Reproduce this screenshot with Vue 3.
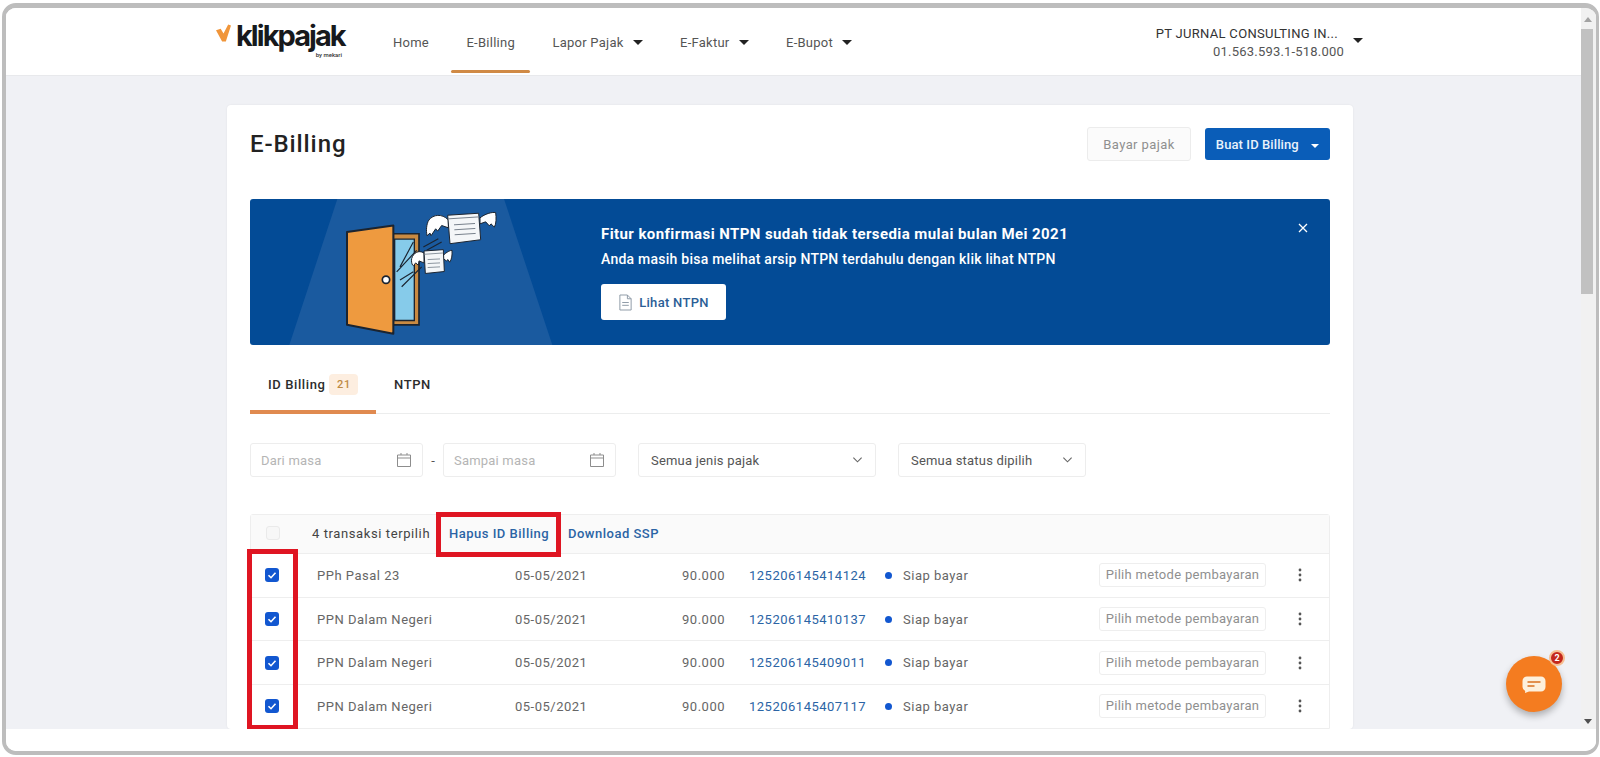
<template>
  <div class="window">
    <div class="frame">
      <div class="viewport">
        <div class="page">
          <header class="topbar">
            <div class="logo">
              <svg class="logo__check" viewBox="0 0 16 18" aria-hidden="true">
                <path d="M0 6l5-1.500 3 5L13 0l3 1-5.500 17H6.500z" fill="#f0953a" />
              </svg>
              <div class="logo__words">
                <span class="logo__name">klikpajak</span>
                <span class="logo__by">by mekari</span>
              </div>
            </div>
            <nav class="nav">
              <a
                v-for="item in navItems"
                :key="item.label"
                class="nav__item"
                :class="{ 'nav__item--active': item.active }"
              >
                {{ item.label }}
                <i v-if="item.caret" class="caret"></i>
              </a>
            </nav>
            <div class="account">
              <div class="account__text">
                <div class="account__name">PT JURNAL CONSULTING IN...</div>
                <div class="account__npwp">01.563.593.1-518.000</div>
              </div>
              <i class="caret account__caret"></i>
            </div>
          </header>

          <main class="card">
            <div class="card__head">
              <h1 class="card__title">E-Billing</h1>
              <button class="btn btn--ghost">Bayar pajak</button>
              <button class="btn btn--primary">Buat ID Billing <i class="caret caret--white"></i></button>
            </div>

            <section class="banner">
              <svg class="banner__art" viewBox="15 25 1053 441" preserveAspectRatio="none" aria-hidden="true">
                <path d="M277 25H777L922 466H133z" fill="#1a5a9f" />
                <path d="M445 130H522V405H445z" fill="#c98a42" stroke="#1b2430" stroke-width="5" />
                <path d="M449 146H508V392H449z" fill="#86cbea" stroke="#1b2430" stroke-width="4" />
                <path d="M306 125L445 105V432L306 405z" fill="#ee9a3f" stroke="#1b2430" stroke-width="6" stroke-linejoin="round" />
                <circle cx="423" cy="269" r="11" fill="#fff" stroke="#1b2430" stroke-width="5" />
                <path d="M465 230L505 155M455 245L515 180M465 270L505 245M470 290L530 230M535 170L580 145M545 180L590 155" stroke="#1b2430" stroke-width="3.500" fill="none" />

                <path d="M610 88C590 68 565 72 552 88C544 100 543 120 546 136L555 128L558 136L572 115L578 122L590 105L610 112z" fill="#fff" stroke="#1b2430" stroke-width="3" stroke-linejoin="round" />
                <path d="M705 82C720 70 740 64 752 66C754 82 754 100 748 110L738 100L733 106L722 94L705 100z" fill="#fff" stroke="#1b2430" stroke-width="3" stroke-linejoin="round" />
                <path d="M608 74L701 68L707 148L615 160z" fill="#f4f6f8" stroke="#1b2430" stroke-width="3" />
                <path d="M609 85L702 79M627 103L690 99M628 118L691 114M629 133L692 129" stroke="#77818c" stroke-width="3" fill="none" />

                <path d="M537 188C520 178 505 188 500 205C498 215 502 228 506 226L512 218L520 225L522 212L537 218z" fill="#fff" stroke="#1b2430" stroke-width="3" stroke-linejoin="round" />
                <path d="M595 195C605 185 615 180 621 180C622 195 620 208 614 216L609 208L604 212L595 205z" fill="#fff" stroke="#1b2430" stroke-width="3" stroke-linejoin="round" />
                <path d="M537 182L595 178L598 244L541 250z" fill="#f4f6f8" stroke="#1b2430" stroke-width="3" />
                <path d="M538 192L595 188M548 208L585 206M548 220L585 218M548 232L585 230" stroke="#77818c" stroke-width="2.500" fill="none" />
              </svg>
              <div class="banner__body">
                <div class="banner__title">Fitur konfirmasi NTPN sudah tidak tersedia mulai bulan Mei 2021</div>
                <div class="banner__sub">Anda masih bisa melihat arsip NTPN terdahulu dengan klik lihat NTPN</div>
                <button class="banner__btn">
                  <svg viewBox="0 0 16 18" aria-hidden="true">
                    <path d="M2 1h8l4 4v12H2zM10 1v4h4M4.500 9h7M4.500 12h7" fill="none" stroke="#8a96a3" stroke-width="1" />
                  </svg>
                  Lihat NTPN
                </button>
              </div>
              <svg class="banner__close" viewBox="0 0 10 10" aria-hidden="true">
                <path d="M1 1l8 8M9 1l-8 8" stroke="#fff" stroke-width="1.300" />
              </svg>
            </section>

            <div class="tabs">
              <a class="tab tab--active">ID Billing <span class="tab__badge">21</span></a>
              <a class="tab">NTPN</a>
            </div>

            <div class="filters">
              <div class="field field--date">
                <span>Dari masa</span>
                <svg viewBox="0 0 16 16" aria-hidden="true"><path d="M1.500 3h13v11.500h-13zM1.500 6h13M5 1v2M11 1v2" fill="none" stroke="#8d8d8d" /></svg>
              </div>
              <span class="filters__dash">-</span>
              <div class="field field--date">
                <span>Sampai masa</span>
                <svg viewBox="0 0 16 16" aria-hidden="true"><path d="M1.500 3h13v11.500h-13zM1.500 6h13M5 1v2M11 1v2" fill="none" stroke="#8d8d8d" /></svg>
              </div>
              <div class="field field--select field--jenis">
                <span>Semua jenis pajak</span>
                <svg viewBox="0 0 12 8" aria-hidden="true"><path d="M1.500 1.500L6 6l4.500-4.500" fill="none" stroke="#666" stroke-width="1.200" /></svg>
              </div>
              <div class="field field--select field--status">
                <span>Semua status dipilih</span>
                <svg viewBox="0 0 12 8" aria-hidden="true"><path d="M1.500 1.500L6 6l4.500-4.500" fill="none" stroke="#666" stroke-width="1.200" /></svg>
              </div>
            </div>

            <div class="table">
              <div class="table__head">
                <span class="check check--empty"></span>
                <span class="table__count">4 transaksi terpilih</span>
                <a class="table__link table__link--boxed">Hapus ID Billing</a>
                <a class="table__link">Download SSP</a>
              </div>
              <div v-for="row in rows" :key="row.id" class="row">
                <span class="row__check">
                  <span class="check">
                    <svg viewBox="0 0 14 14" aria-hidden="true"><path d="M3.500 7.200l2.500 2.500 4.500-5" fill="none" stroke="#fff" stroke-width="1.600" /></svg>
                  </span>
                </span>
                <span class="row__name">{{ row.name }}</span>
                <span class="row__date">05-05/2021</span>
                <span class="row__amount">90.000</span>
                <a class="row__id">{{ row.id }}</a>
                <span class="row__status"><i></i>Siap bayar</span>
                <span class="row__pill">Pilih metode pembayaran</span>
                <svg class="row__more" viewBox="0 0 4 14" aria-hidden="true">
                  <circle cx="2" cy="2" r="1.400" /><circle cx="2" cy="7" r="1.400" /><circle cx="2" cy="12" r="1.400" />
                </svg>
              </div>
              <div class="marker" aria-hidden="true"></div>
            </div>
          </main>

          <button class="chat">
            <svg viewBox="0 0 24 17" aria-hidden="true">
              <path d="M5 .5h14a4.500 4.500 0 0 1 4.500 4.500v6a4.500 4.500 0 0 1-4.500 4.500H7L3 17l.2-2A4.500 4.500 0 0 1 .5 11V5A4.500 4.500 0 0 1 5 .5z" fill="#fdf0dc" />
              <path d="M5.500 6h13M5.500 10h7" stroke="#d9701f" stroke-width="1.500" />
            </svg>
            <span class="chat__badge">2</span>
          </button>
        </div>

        <div class="scrollbar">
          <i class="scrollbar__up"></i>
          <div class="scrollbar__thumb"></div>
          <i class="scrollbar__down"></i>
        </div>
      </div>
      <div class="frame__foot"></div>
    </div>
  </div>
</template>

<script setup>
const navItems = [
  { label: 'Home' },
  { label: 'E-Billing', active: true },
  { label: 'Lapor Pajak', caret: true },
  { label: 'E-Faktur', caret: true },
  { label: 'E-Bupot', caret: true },
]

const rows = [
  { id: '125206145414124', name: 'PPh Pasal 23' },
  { id: '125206145410137', name: 'PPN Dalam Negeri' },
  { id: '125206145409011', name: 'PPN Dalam Negeri' },
  { id: '125206145407117', name: 'PPN Dalam Negeri' },
]
</script>

<style>
html, body { margin: 0; background: #fff; }
</style>

<style scoped>
* { box-sizing: border-box; }

.window {
  width: 1600px;
  height: 757px;
  padding: 3px 1px 2px 2px;
  font-family: Roboto, "Liberation Sans", sans-serif;
  color: #4a4a4a;
  overflow: hidden;
}
.frame {
  height: 100%;
  border: 4px solid #bdbdbd;
  border-top-width: 5px;
  border-right-width: 3px;
  border-radius: 14px;
  overflow: hidden;
  display: flex;
  flex-direction: column;
  background: #fff;
}
.viewport {
  height: 721px;
  display: flex;
  flex-shrink: 0;
}
.frame__foot { flex: 1; background: #fff; }

.page {
  position: relative;
  flex: 1;
  background: #f0f1f5;
  overflow: hidden;
}

/* top bar */
.topbar {
  height: 68px;
  background: #fff;
  border-bottom: 1px solid #e8e9ec;
  display: flex;
  padding-left: 210px;
}
.logo {
  display: flex;
  width: 162px;
  padding-top: 14px;
}
.logo__check { width: 15px; height: 18px; margin-top: 2px; }
.logo__words { display: flex; flex-direction: column; margin-left: 5px; width: 106px; }
.logo__name {
  font: 700 29px/27px Inter, sans-serif;
  letter-spacing: -1.950px;
  color: #17191c;
  white-space: nowrap;
}
.logo__by {
  margin-top: 3px;
  font: 500 6px/6px Roboto, sans-serif;
  text-align: right;
  color: #333;
}
.nav { display: flex; gap: 7.500px; }
.nav__item {
  position: relative;
  display: flex;
  align-items: center;
  gap: 9px;
  padding: 0 15px;
  font-size: 13px;
  letter-spacing: 0.250px;
  color: #555;
  height: 68px;
}
.nav__item--active::after {
  content: '';
  position: absolute;
  left: 0;
  right: 0;
  bottom: 3px;
  height: 3px;
  border-radius: 2px;
  background: #d08a45;
}
.caret {
  display: inline-block;
  width: 0;
  height: 0;
  border-left: 5px solid transparent;
  border-right: 5px solid transparent;
  border-top: 5px solid #222;
}
.caret--white { border-left-width: 4px; border-right-width: 4px; border-top: 4px solid #fff; margin-left: 9px; margin-bottom: 1px; }
.account {
  margin-left: auto;
  display: flex;
  padding: 17px 218px 0 0;
}
.account__text { text-align: right; font-size: 13px; line-height: 18px; letter-spacing: 0.300px; }
.account__name { color: #333; padding-right: 6px; }
.account__npwp { color: #555; letter-spacing: 0.200px; }
.account__caret { margin: 13px 0 0 9px; }

/* card */
.card {
  width: 1126px;
  margin: 29px 0 0 221px;
  background: #fff;
  border-radius: 4px;
  padding: 0 23px;
  box-shadow: 0 0 2px rgba(0, 0, 0, .08);
}
.card__head {
  display: flex;
  align-items: center;
  height: 94px;
  gap: 14px;
  padding-bottom: 16px;
}
.card__title {
  margin: 0 auto 0 0;
  font-size: 24px;
  font-weight: 500;
  letter-spacing: 0.900px;
  color: #222;
}
.btn {
  font-family: inherit;
  font-size: 13px;
  border-radius: 3px;
  height: 32px;
}
.btn--ghost {
  width: 104px;
  height: 34px;
  border: 1px solid #ececec;
  background: #fbfbfb;
  color: #8f8f8f;
  letter-spacing: 0.400px;
}
.btn--primary {
  width: 125px;
  border: 0;
  background: #0a5db8;
  color: #e9f2fb;
  font-weight: 500;
  letter-spacing: 0.100px;
}

.banner {
  position: relative;
  display: flex;
  height: 146px;
  background: #034b96;
  border-radius: 3px;
  overflow: hidden;
}
.banner__art { width: 351px; height: 146px; flex-shrink: 0; }
.banner__body { padding-top: 25px; color: #fff; }
.banner__title {
  font-size: 15px;
  font-weight: 700;
  line-height: 20px;
  letter-spacing: 0.420px;
}
.banner__sub {
  margin-top: 7px;
  font-size: 14px;
  font-weight: 500;
  line-height: 16px;
  letter-spacing: 0.240px;
}
.banner__btn {
  margin-top: 17px;
  display: flex;
  align-items: center;
  justify-content: center;
  gap: 6px;
  width: 125px;
  height: 36px;
  border: 0;
  border-radius: 3px;
  background: #fff;
  color: #2b5e96;
  font: 500 13px Roboto, sans-serif;
  letter-spacing: 0.300px;
}
.banner__btn svg { width: 15px; height: 17px; }
.banner__close {
  position: absolute;
  top: 24px;
  right: 22px;
  width: 10px;
  height: 10px;
}

/* tabs */
.tabs {
  display: flex;
  height: 69px;
  border-bottom: 1px solid #eceded;
}
.tab {
  position: relative;
  display: flex;
  align-items: center;
  height: 69px;
  padding: 10px 18px 0;
  margin-bottom: -1px;
  font-size: 13px;
  font-weight: 500;
  letter-spacing: 0.600px;
  color: #2c2c2c;
  white-space: nowrap;
}
.tab--active { width: 126px; padding-right: 0; }
.tab--active::after {
  content: '';
  position: absolute;
  left: 0;
  right: 0;
  bottom: 0;
  height: 4px;
  background: #e08a50;
}
.tab__badge {
  margin-left: 4px;
  width: 29px;
  height: 21px;
  line-height: 21px;
  text-align: center;
  font-size: 11px;
  border-radius: 4px;
  background: #fdeee0;
  color: #bd8a45;
  flex-shrink: 0;
}

/* filters */
.filters {
  display: flex;
  align-items: center;
  margin-top: 29px;
  height: 34px;
}
.filters__dash { width: 20px; text-align: center; color: #555; font-size: 13px; }
.field {
  display: flex;
  align-items: center;
  justify-content: space-between;
  height: 34px;
  border: 1px solid #ededed;
  border-radius: 3px;
  font-size: 13px;
  letter-spacing: 0.200px;
}
.field--date { width: 173px; padding: 0 10px; color: #b5b5b5; }
.field--date svg { width: 16px; height: 16px; }
.field--select { padding: 0 12px; color: #555; }
.field--select svg { width: 11px; height: 8px; }
.field--jenis { width: 238px; margin-left: 22px; }
.field--status { width: 188px; margin-left: 22px; }

/* table */
.table {
  position: relative;
  margin-top: 37px;
  border: 1px solid #eeeeee;
  border-radius: 3px 3px 0 0;
}
.table__head {
  display: flex;
  align-items: center;
  height: 38px;
  padding-bottom: 2px;
  background: #fafafa;
  font-size: 13px;
  letter-spacing: 0.600px;
}
.table__head .check { margin: 0 32px 0 15px; }
.table__count { color: #444; width: 137px; }
.table__link { color: #2b64a5; font-weight: 500; letter-spacing: 0.500px; }
.table__link--boxed {
  position: relative;
  width: 119px;
}
.table__link--boxed::before {
  content: '';
  position: absolute;
  left: -13px;
  right: 7px;
  top: -14px;
  bottom: -16px;
  border: 5px solid #df1522;
}
.check {
  display: inline-flex;
  width: 14px;
  height: 14px;
  border-radius: 3px;
  background: #1257d0;
}
.check svg { width: 14px; height: 14px; }
.check--empty { background: #f7f7f7; border: 1px solid #eaeaea; }
.row {
  display: flex;
  align-items: center;
  height: 43.700px;
  border-top: 1px solid #eeeeee;
  font-size: 13px;
  letter-spacing: 0.500px;
  color: #666;
}
.row__check { width: 66px; padding-left: 14px; display: flex; }
.row__name { width: 198px; }
.row__date { width: 143px; }
.row__amount { width: 67px; text-align: right; flex-shrink: 0; }
.row__id { width: 141px; padding-left: 24px; color: #2b64a5; }
.row__status { display: flex; align-items: center; margin-left: 19px; width: 214px; }
.row__status i {
  width: 7px;
  height: 7px;
  border-radius: 50%;
  background: #1257d0;
  margin-right: 11px;
}
.row__pill {
  width: 167px;
  height: 24px;
  line-height: 22px;
  text-align: center;
  border: 1px solid #eeeeee;
  border-radius: 3px;
  color: #8f8f8f;
  font-size: 13px;
  letter-spacing: 0.300px;
  white-space: nowrap;
}
.row__more { width: 4px; height: 14px; margin-left: 32px; fill: #555; }
.marker {
  position: absolute;
  left: -4px;
  top: 34px;
  width: 51px;
  height: 181px;
  border: 5px solid #df1522;
  pointer-events: none;
}

/* chat */
.chat {
  position: absolute;
  right: 19px;
  top: 648px;
  width: 56px;
  height: 56px;
  border: 0;
  border-radius: 50%;
  background: #f47c20;
  box-shadow: 0 4px 7px rgba(0, 0, 0, .28);
  display: flex;
  align-items: center;
  justify-content: center;
}
.chat svg { width: 24px; height: 17px; }
.chat__badge {
  position: absolute;
  top: -6px;
  right: -3px;
  width: 16px;
  height: 16px;
  border-radius: 50%;
  border: 2px solid #f6bf92;
  background: #c4281c;
  color: #fff;
  font: 700 9px/12px Roboto, sans-serif;
}

/* scrollbar */
.scrollbar {
  width: 15px;
  flex-shrink: 0;
  background: #f1f1f1;
  display: flex;
  flex-direction: column;
}
.scrollbar__up, .scrollbar__down {
  width: 0;
  height: 0;
  border-left: 4px solid transparent;
  border-right: 4px solid transparent;
  margin: 9px 0 7px 3px;
}
.scrollbar__up { border-bottom: 5px solid #a3a3a3; }
.scrollbar__down { border-top: 5px solid #505050; margin-top: auto; margin-bottom: 5px; }
.scrollbar__thumb { width: 12px; height: 265px; background: #c1c1c1; }
</style>
